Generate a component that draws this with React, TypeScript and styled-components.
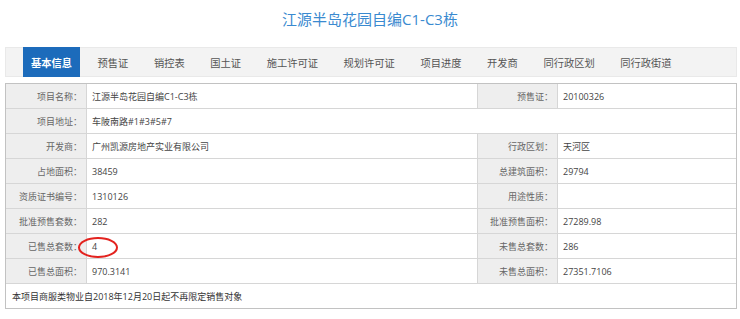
import React from "react";
import styled, { createGlobalStyle } from "styled-components";

const Global = createGlobalStyle`
  html, body { margin: 0; padding: 0; background: #ffffff; }
  body { font-family: "Open Sans", "Noto Sans CJK SC", sans-serif; }
`;

const Page = styled.div`
  width: 740px;
  padding: 0 3px 0 5px;
  box-sizing: border-box;
`;

const Title = styled.h1`
  margin: 0;
  height: 37px;
  display: flex;
  align-items: center;
  justify-content: center;
  font-size: 15px;
  font-weight: 400;
  color: #3a8ad0;
  font-family: "Open Sans", "Noto Sans CJK SC", sans-serif;
  margin-top: 0;
  margin-bottom: 10px;
  padding-left: 0;
  margin-left: -5px;
  margin-right: -3px;
`;

const TabBar = styled.nav`
  display: flex;
  align-items: stretch;
  gap: 9.6px;
  height: 30px;
  box-sizing: border-box;
  background: #f3f3f3;
  border: 1px solid #e9e9e9;
  padding-left: 17px;
  margin-bottom: 6px;
`;

const Tab = styled.div<{ $active?: boolean }>`
  display: flex;
  align-items: center;
  padding: 0 8px;
  margin: -1px 0;
  font-size: 10.25px;
  font-family: "Noto Sans CJK SC", sans-serif;
  font-weight: ${(p) => (p.$active ? 700 : 400)};
  color: ${(p) => (p.$active ? "#ffffff" : "#555555")};
  background: ${(p) => (p.$active ? "#1c6bbb" : "transparent")};
`;

const Grid = styled.div`
  display: grid;
  grid-template-columns: 80px 390px 79px 1fr;
  grid-auto-rows: 24px;
  gap: 1px;
  background: #d6d6d6;
  border: 1px solid #c2c2c2;
  width: 732px;
  box-sizing: border-box;
`;

const Label = styled.div`
  background: #eeeeee;
  display: flex;
  align-items: center;
  justify-content: flex-end;
  padding-right: 4px;
  font-size: 9px;
  color: #666666;
  font-family: "Noto Sans CJK SC", sans-serif;
  white-space: nowrap;
`;

const Value = styled.div<{ $span?: number }>`
  position: relative;
  background: #ffffff;
  display: flex;
  align-items: center;
  padding-left: 5px;
  font-size: 9px;
  color: #444444;
  font-family: "Open Sans", "Noto Sans CJK SC", sans-serif;
  white-space: nowrap;
  grid-column: span ${(p) => p.$span ?? 1};
`;

const Footer = styled(Value)`
  padding-left: 6px;
  color: #333333;
`;

const Circle = styled.svg`
  position: absolute;
  left: -9px;
  top: 3px;
  width: 40px;
  height: 21px;
  overflow: visible;
`;

const tabs = [
  "基本信息",
  "预售证",
  "销控表",
  "国土证",
  "施工许可证",
  "规划许可证",
  "项目进度",
  "开发商",
  "同行政区划",
  "同行政街道",
];

export default function App() {
  return (
    <Page>
      <Global />
      <Title>江源半岛花园自编C1-C3栋</Title>
      <TabBar>
        {tabs.map((t, i) => (
          <Tab key={t} $active={i === 0}>
            {t}
          </Tab>
        ))}
      </TabBar>
      <Grid>
        <Label>项目名称：</Label>
        <Value>江源半岛花园自编C1-C3栋</Value>
        <Label>预售证：</Label>
        <Value>20100326</Value>

        <Label>项目地址：</Label>
        <Value $span={3}>车陂南路#1#3#5#7</Value>

        <Label>开发商：</Label>
        <Value>广州凯源房地产实业有限公司</Value>
        <Label>行政区划：</Label>
        <Value>天河区</Value>

        <Label>占地面积：</Label>
        <Value>38459</Value>
        <Label>总建筑面积：</Label>
        <Value>29794</Value>

        <Label>资质证书编号：</Label>
        <Value>1310126</Value>
        <Label>用途性质：</Label>
        <Value></Value>

        <Label>批准预售套数：</Label>
        <Value>282</Value>
        <Label>批准预售面积：</Label>
        <Value>27289.98</Value>

        <Label>已售总套数：</Label>
        <Value>
          4
          <Circle viewBox="0 0 40 21">
            <ellipse
              cx="20"
              cy="10.5"
              rx="19"
              ry="9.5"
              fill="none"
              stroke="#e3231f"
              strokeWidth="2"
            />
          </Circle>
        </Value>
        <Label>未售总套数：</Label>
        <Value>286</Value>

        <Label>已售总面积：</Label>
        <Value>970.3141</Value>
        <Label>未售总面积：</Label>
        <Value>27351.7106</Value>

        <Footer $span={4}>本项目商服类物业自2018年12月20日起不再限定销售对象</Footer>
      </Grid>
    </Page>
  );
}
